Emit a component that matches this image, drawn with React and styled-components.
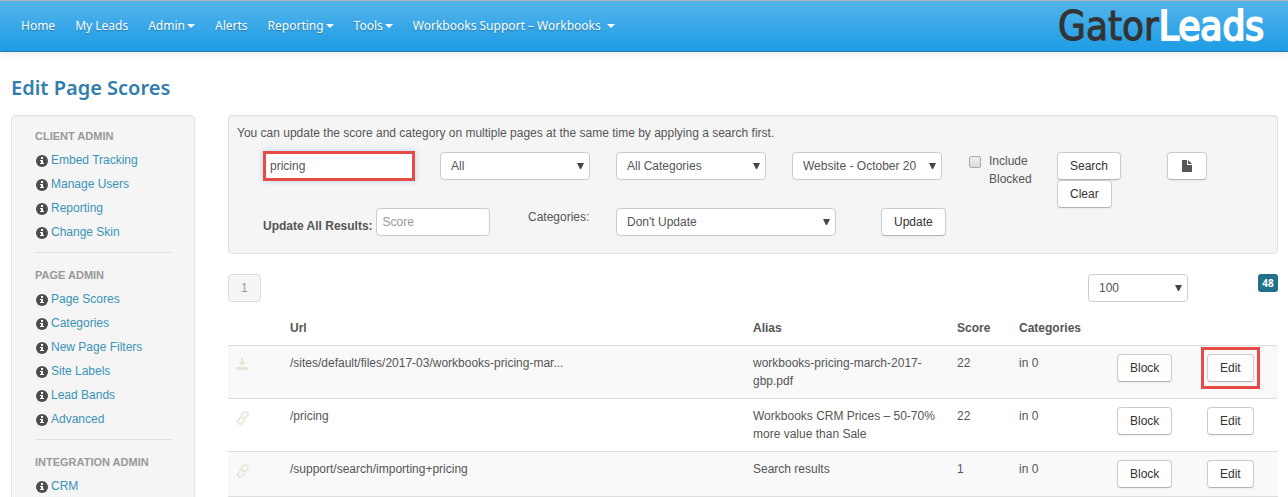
import React from 'react';
import styled, {createGlobalStyle, css} from "styled-components";


const navItems = [
    {label: "Home"},
    {label: "My Leads"},
    {label: "Admin", menu: true},
    {label: "Alerts"},
    {label: "Reporting", menu: true},
    {label: "Tools", menu: true},
    {label: "Workbooks Support – Workbooks", menu: true, wide: true},
]

const sections = [
    {title: "Client Admin", links: ["Embed Tracking", "Manage Users", "Reporting", "Change Skin"]},
    {title: "Page Admin", links: ["Page Scores", "Categories", "New Page Filters", "Site Labels", "Lead Bands", "Advanced"]},
    {title: "Integration Admin", links: ["CRM"]},
]

const pages = [
    {
        url: "/sites/default/files/2017-03/workbooks-pricing-mar...",
        alias: "workbooks-pricing-march-2017-gbp.pdf",
        score: 22,
        download: true,
        marked: true,
    },
    {url: "/pricing", alias: "Workbooks CRM Prices – 50-70% more value than Sale", score: 22},
    {url: "/support/search/importing+pricing", alias: "Search results", score: 1},
]

const InfoIcon = () => (
    <svg width="12" height="12" viewBox="0 0 12 12" aria-hidden="true">
        <circle cx="6" cy="6" r="6" fill="#4d4d4d"/>
        <path d="M5 2h2v2H5zM4 5h3v3h1v1H4V8h1V6H4z" fill="#fff"/>
    </svg>
)

const FileIcon = () => (
    <svg width="10" height="12" viewBox="0 0 10 12" aria-hidden="true">
        <path d="M0 0h5v5h5v7H0z M6 0l4 4H6z" fill="#555"/>
    </svg>
)

const LinkIcon = () => (
    <svg width="14" height="14" viewBox="0 0 14 14" fill="none" stroke="#eceade" strokeWidth="2" aria-hidden="true">
        <rect x="5" y="2" width="7" height="5" rx="2" transform="rotate(-50 8 4)"/>
        <rect x="1" y="7" width="7" height="5" rx="2" transform="rotate(-50 5 9)"/>
    </svg>
)

const DownloadIcon = () => (
    <svg width="12" height="12" viewBox="0 0 12 12" fill="#e6e4d6" aria-hidden="true">
        <path d="M5 0h2v4h3L6 8 2 4h3zM0 9h12v3H0z"/>
    </svg>
)

const Select = ({id, label, width, options}) => (
    <SelectBox $width={width}>
        <select id={id} aria-label={label}>
            {options.map(option => <option key={option}>{option}</option>)}
        </select>
        <svg width="7" height="6" viewBox="0 0 7 6" aria-hidden="true">
            <path d="M0 0h7L4 6H3z" fill="#444"/>
        </svg>
    </SelectBox>
)

const NavBar = () => (
    <Bar>
        <Menu>
            {navItems.map(({label, menu, wide}) => (
                <NavLink href="#" key={label}>
                    {label}
                    {menu && <Caret $wide={wide}/>}
                </NavLink>
            ))}
        </Menu>
        <Logo href="#">Gator<span>Leads</span></Logo>
    </Bar>
)

const SideBar = () => (
    <Side>
        {sections.map(({title, links}) => (
            <Section key={title}>
                <h2>{title}</h2>
                {links.map(link => (
                    <SideItem key={link}>
                        <InfoIcon/>
                        <a href="#">{link}</a>
                    </SideItem>
                ))}
            </Section>
        ))}
    </Side>
)

const SearchForm = () => (
    <Filters onSubmit={e => e.preventDefault()}>
        <p>You can update the score and category on multiple pages at the same time by applying a search first.</p>
        <FilterRow>
            <SearchInput type="text" aria-label="Search pages" defaultValue="pricing"/>
            <Select label="Type" width={150} options={["All"]}/>
            <Select label="Category" width={150} options={["All Categories"]}/>
            <Select label="Website" width={150} options={["Website - October 20"]}/>
            <CheckLabel>
                <input type="checkbox"/>
                <span>Include Blocked</span>
            </CheckLabel>
            <ButtonStack>
                <Button>Search</Button>
                <Button type="button">Clear</Button>
            </ButtonStack>
            <div>
                <Button type="button" $icon aria-label="Export"><FileIcon/></Button>
            </div>
        </FilterRow>
        <UpdateRow>
            <ScoreField>
                <label htmlFor="score">Update All Results:</label>
                <Input id="score" type="text" placeholder="Score"/>
            </ScoreField>
            <label htmlFor="categories">Categories:</label>
            <Select id="categories" width={220} options={["Don't Update"]}/>
            <div>
                <Button type="button">Update</Button>
            </div>
        </UpdateRow>
    </Filters>
)

const PagesTable = () => (
    <Table>
        <colgroup>
            <Col $width={54}/>
            <Col/>
            <Col $width={204}/>
            <Col $width={62}/>
            <Col $width={98}/>
            <Col $width={90}/>
            <Col $width={79}/>
        </colgroup>
        <thead>
        <tr>
            <th/>
            <th>Url</th>
            <th>Alias</th>
            <th>Score</th>
            <th>Categories</th>
            <th/>
            <th/>
        </tr>
        </thead>
        <tbody>
        {pages.map(({url, alias, score, download, marked}) => (
            <tr key={url}>
                <IconCell>{download ? <DownloadIcon/> : <LinkIcon/>}</IconCell>
                <td>{url}</td>
                <td>{alias}</td>
                <td>{score}</td>
                <td>in 0</td>
                <td><Button>Block</Button></td>
                <td><Mark $on={marked}><Button>Edit</Button></Mark></td>
            </tr>
        ))}
        </tbody>
    </Table>
)

const App = () => (
    <>
        <GlobalStyle/>
        <NavBar/>
        <Page>
            <h1>Edit Page Scores</h1>
            <Columns>
                <SideBar/>
                <main>
                    <SearchForm/>
                    <ListBar>
                        <PageButton disabled>1</PageButton>
                        <ListTools>
                            <Select label="Results per page" width={100} options={["100"]}/>
                            <Badge>48</Badge>
                        </ListTools>
                    </ListBar>
                    <PagesTable/>
                </main>
            </Columns>
        </Page>
    </>
);

export default App;

const GlobalStyle = createGlobalStyle`
  * {
    box-sizing: border-box;
  }

  html {
    scrollbar-width: none;
  }

  body {
    margin: 0;
    background: #fff;
    color: #555;
    font: 12px/18px "Liberation Sans", Arial, sans-serif;
  }

  input, select, button {
    font: inherit;
  }
`

const Bar = styled.header`
  display: flex;
  justify-content: space-between;
  align-items: center;
  height: 52px;
  padding: 0 24px 0 11px;
  border-top: 1px solid #b0b0b0;
  border-bottom: 1px solid #1b7fb5;
  background: linear-gradient(#54b4eb, #1d9ce5);
  box-shadow: 0 1px 10px rgba(0, 0, 0, 0.1);
`

const Menu = styled.nav`
  display: flex;
`

const NavLink = styled.a`
  display: flex;
  align-items: center;
  padding: 0 10px;
  color: #fff;
  font: 12px/20px "Noto Sans", sans-serif;
  text-decoration: none;
  text-shadow: 0 1px 1px rgba(0, 0, 0, 0.3);
`

const Caret = styled.span`
  margin-left: ${({$wide}) => $wide ? 6 : 2}px;
  border: 4px solid transparent;
  border-top-color: #fff;
  border-bottom: 0;
`

const Logo = styled.a`
  color: #333;
  font: 40px/48px "DejaVu Sans Condensed", "DejaVu Sans", sans-serif;
  text-decoration: none;
  -webkit-text-stroke: 1px #333;

  span {
    color: #fff;
    -webkit-text-stroke: 2px #fff;
  }
`

const Page = styled.div`
  padding: 0 10px 0 11px;

  h1 {
    margin: 18px 0 9px;
    color: #317eac;
    font: 600 20px/36px "Noto Sans", sans-serif;
  }
`

const Columns = styled.div`
  display: grid;
  grid-template-columns: minmax(0, 184fr) minmax(0, 1050fr);
  align-items: start;
  gap: 33px;
`

const panel = css`
  border: 1px solid #e3e3e3;
  border-radius: 4px;
  background: #f5f5f5;
  box-shadow: inset 0 1px 1px rgba(0, 0, 0, 0.05);
`

const Side = styled.aside`
  ${panel}
  padding: 8px 23px;
`

const Section = styled.section`
  & + & {
    margin-top: 8px;
    border-top: 1px solid #e0e0e0;
    padding-top: 10px;
  }

  h2 {
    margin: 0;
    color: #999;
    font-size: 11px;
    font-weight: bold;
    line-height: 24px;
    text-transform: uppercase;
  }
`

const SideItem = styled.div`
  display: flex;
  align-items: center;
  gap: 3px;
  padding-left: 1px;
  line-height: 24px;

  svg {
    margin-top: 2px;
  }

  a {
    color: #3a93b8;
    text-decoration: none;
  }
`

const Filters = styled.form`
  ${panel}
  padding: 8px 8px 17px;

  p {
    margin: 0 0 10px;
  }
`

const FilterRow = styled.div`
  display: grid;
  grid-template-columns: 177fr 176fr 176fr 177fr 88fr 110fr 102fr;
  align-items: start;
  margin-left: 26px;
`

const UpdateRow = styled.div`
  display: grid;
  grid-template-columns: 265fr 88fr 265fr 388fr;
  align-items: start;
  margin-left: 26px;
`

const Input = styled.input`
  width: 114px;
  height: 28px;
  border: 1px solid #ccc;
  border-radius: 4px;
  padding: 0 6px;
  background: #fff;
  color: #555;

  &::placeholder {
    color: #999;
  }
`

const SearchInput = styled(Input)`
  width: 152px;
  height: 30px;
  margin: -1px 0;
  border: 3px solid #e84a45;
  border-radius: 0;
  padding: 0 4px;
  outline: 0;
  box-shadow: 0 0 6px rgba(82, 168, 236, 0.4);
`

const SelectBox = styled.div`
  position: relative;
  width: ${({$width}) => $width}px;
  height: 28px;

  select {
    appearance: none;
    width: 100%;
    height: 28px;
    border: 1px solid #ccc;
    border-radius: 4px;
    padding: 0 20px 0 10px;
    background: #fff;
    color: #555;
  }

  svg {
    position: absolute;
    top: 11px;
    right: 6px;
    pointer-events: none;
  }
`

const CheckLabel = styled.label`
  display: flex;
  align-items: flex-start;
  gap: 8px;

  input {
    appearance: none;
    flex: none;
    width: 12px;
    height: 12px;
    margin: 4px 0 0;
    border: 1px solid #aaa;
    border-radius: 2px;
    background: linear-gradient(#eee, #ddd);
  }
`

const Button = styled.button`
  display: inline-flex;
  justify-content: center;
  align-items: center;
  height: 28px;
  border: 1px solid #ccc;
  border-bottom-color: #b3b3b3;
  border-radius: 4px;
  padding: 0 ${({$icon}) => $icon ? 14 : 12}px;
  background: #fff;
  color: #333;
  box-shadow: 0 1px 2px rgba(0, 0, 0, 0.05);
  vertical-align: top;
`

const ButtonStack = styled.div`
  display: flex;
  flex-direction: column;
  align-items: flex-start;
`

const ScoreField = styled.div`
  display: flex;
  align-items: center;
  gap: 3px;

  label {
    padding-top: 8px;
    font-weight: bold;
  }
`

const ListBar = styled.div`
  display: flex;
  justify-content: space-between;
  margin: 20px 0 9px;
`

const PageButton = styled.button`
  height: 28px;
  border: 1px solid #ddd;
  border-radius: 4px;
  padding: 0 12px;
  background: #f5f5f5;
  color: #999;
`

const ListTools = styled.div`
  display: flex;
  align-items: flex-start;
  gap: 70px;
`

const Badge = styled.span`
  min-width: 20px;
  border-radius: 3px;
  padding: 0 4px;
  background: #22718c;
  color: #fff;
  font: bold 10px/18px "Open Sans", sans-serif;
  text-align: center;
`

const Table = styled.table`
  width: 100%;
  border-collapse: separate;
  border-spacing: 0;
  border-bottom: 1px solid #ddd;
  table-layout: fixed;

  th, td {
    padding: 8px;
    text-align: left;
    vertical-align: top;
  }

  td {
    border-top: 1px solid #ddd;
  }

  tbody tr:nth-child(odd) td {
    background: #f9f9f9;
  }
`

const Col = styled.col`
  width: ${({$width}) => $width ? `${$width}px` : "auto"};
`

const IconCell = styled.td`
  svg {
    display: block;
    margin-top: 4px;
  }
`

const Mark = styled.div`
  position: relative;
  display: inline-block;

  ${({$on}) => $on && css`
    &::after {
      content: "";
      position: absolute;
      inset: -7px -6px;
      border: 3px solid #e84a45;
      pointer-events: none;
    }
  `}
`
